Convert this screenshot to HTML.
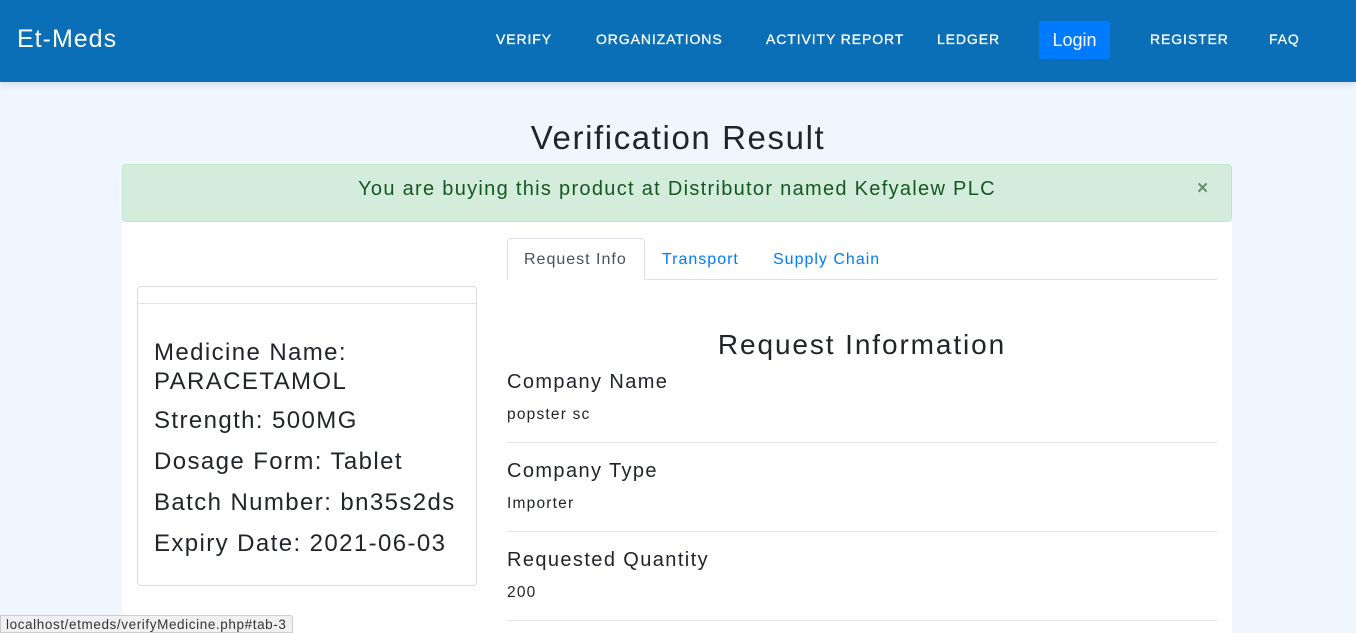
<!DOCTYPE html>
<html><head><style>
*{margin:0;padding:0;box-sizing:border-box}
html,body{width:1356px;height:633px;overflow:hidden}
body{background:#f0f6fe;font-family:"Liberation Sans",sans-serif;position:relative;color:#212529}
.a{position:absolute;white-space:nowrap}
.nav{position:absolute;left:0;top:0;width:1356px;height:82px;background:#0b6fb7;box-shadow:0 2px 8px rgba(0,0,0,.12)}
.nl{position:absolute;top:31px;color:#fff;font-size:14px;letter-spacing:.9px;font-weight:normal;-webkit-text-stroke:.3px #fff}
.card{position:absolute;left:122px;top:221px;width:1110px;height:420px;background:#fff}
.lbl{font-size:20px;letter-spacing:1.4px}
.val{font-size:15.5px;letter-spacing:1.2px}
.big{font-size:24px;letter-spacing:1.4px}
.hr{position:absolute;left:507px;width:710px;height:1px;background:#e3e3e3}
</style></head><body>
<div class="nav">
<div class="a" style="left:17px;top:25px;color:#fff;font-size:25px;letter-spacing:1px">Et-Meds</div>
<div class="nl" style="left:496px">VERIFY</div>
<div class="nl" style="left:596px">ORGANIZATIONS</div>
<div class="nl" style="left:766px">ACTIVITY REPORT</div>
<div class="nl" style="left:937px">LEDGER</div>
<div class="a" style="left:1039px;top:21px;width:71px;height:38px;background:#007bff;border-radius:3px;color:#fff;font-size:18px;text-align:center;line-height:38px">Login</div>
<div class="nl" style="left:1150px">REGISTER</div>
<div class="nl" style="left:1269px">FAQ</div>
</div>
<div class="a" style="left:0;width:1356px;top:119px;text-align:center;font-size:33px;letter-spacing:1.6px">Verification Result</div>
<div class="card"></div>
<div class="a" style="left:122px;top:164px;width:1110px;height:58px;background:#d4ecdb;border:1px solid #c3e6cb;border-radius:4px"></div>
<div class="a" style="left:122px;width:1110px;top:178px;text-align:center;font-size:20px;color:#155724;letter-spacing:1.3px">You are buying this product at Distributor named Kefyalew PLC</div>
<div class="a" style="left:1197px;top:178px;font-size:19px;font-weight:bold;color:#6b8f74">×</div>
<div class="a" style="left:507px;top:279px;width:710px;height:1px;background:#dee2e6"></div>
<div class="a" style="left:507px;top:238px;width:138px;height:42px;background:#fff;border:1px solid #dee2e6;border-bottom:none;border-radius:4px 4px 0 0"></div>
<div class="a" style="left:524px;top:251px;font-size:16px;letter-spacing:1px;color:#495057">Request Info</div>
<div class="a" style="left:662px;top:251px;font-size:16px;letter-spacing:1px;color:#007bff">Transport</div>
<div class="a" style="left:773px;top:251px;font-size:16px;letter-spacing:1px;color:#007bff">Supply Chain</div>
<div class="a" style="left:137px;top:286px;width:340px;height:300px;border:1px solid #dcdcdc;border-radius:4px"></div>
<div class="a" style="left:138px;top:303px;width:338px;height:1px;background:#e3e3e3"></div>
<div class="a big" style="left:154px;top:338px;line-height:29px">Medicine Name:<br>PARACETAMOL</div>
<div class="a big" style="left:154px;top:407px">Strength: 500MG</div>
<div class="a big" style="left:154px;top:448px">Dosage Form: Tablet</div>
<div class="a big" style="left:154px;top:489px">Batch Number: bn35s2ds</div>
<div class="a big" style="left:154px;top:530px">Expiry Date: 2021-06-03</div>
<div class="a" style="left:507px;width:710px;top:329px;text-align:center;font-size:28px;letter-spacing:1.9px">Request Information</div>
<div class="a lbl" style="left:507px;top:371px">Company Name</div>
<div class="a val" style="left:507px;top:406px">popster sc</div>
<div class="hr" style="top:442px"></div>
<div class="a lbl" style="left:507px;top:460px">Company Type</div>
<div class="a val" style="left:507px;top:495px">Importer</div>
<div class="hr" style="top:531px"></div>
<div class="a lbl" style="left:507px;top:549px">Requested Quantity</div>
<div class="a val" style="left:507px;top:584px">200</div>
<div class="hr" style="top:620px"></div>
<div class="a" style="left:0;top:615px;height:18px;padding:1px 5px;background:#f0f0f0;border:1px solid #ccc;border-radius:0 3px 0 0;font-size:13.5px;letter-spacing:.6px;color:#333">localhost/etmeds/verifyMedicine.php#tab-3</div>
</body></html>
